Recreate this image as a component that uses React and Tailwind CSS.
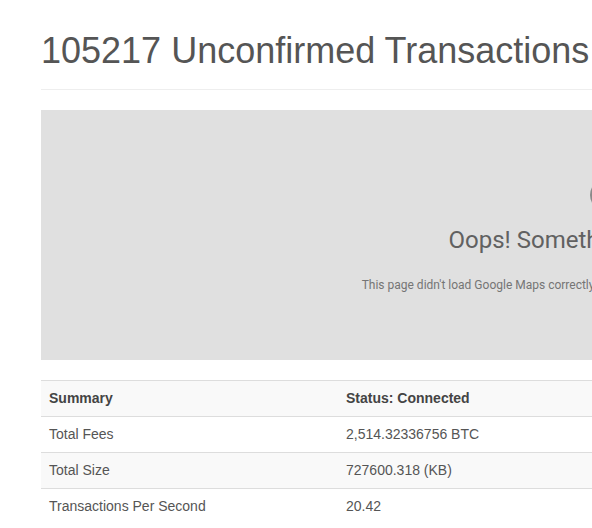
export default function App() {
  const rows = [
    { label: "Total Fees", value: "2,514.32336756 BTC" },
    { label: "Total Size", value: "727600.318 (KB)" },
    { label: "Transactions Per Second", value: "20.42" },
  ];

  return (
    <div className="w-full min-h-[528px] overflow-hidden bg-white font-['Liberation_Sans',Arial,sans-serif]">
      <div className="w-[1140px] ml-[41px]">
        {/* Page header */}
        <div className="pt-[31px] pb-[9px] border-b border-[#eeeeee]">
          <h1 className="text-[36px] leading-[40px] text-[#555555] mb-[9px]">
            105217 Unconfirmed Transactions
          </h1>
        </div>

        {/* Map (failed to load) */}
        <div className="mt-5 h-[250px] w-[1135px] bg-[#e0e0e0] flex flex-col items-center justify-center text-center font-['Roboto',sans-serif]">
          <div className="h-8 w-[38px] rounded-full bg-[#8a8a8a]" />
          <div className="mt-[15px] text-[24px] leading-[28px] text-[#616161]">
            Oops! Something went wrong.
          </div>
          <div className="mt-6 text-[12px] leading-[14px] text-[#757575]">
            This page didn't load Google Maps correctly. See the JavaScript console for technical details.
          </div>
        </div>

        {/* Summary table */}
        <div className="mt-5 text-[14px]">
          <div className="flex items-center h-9 border-t border-[#dddddd] bg-[#f9f9f9] font-bold text-[#444444]">
            <div className="w-[297px] px-2">Summary</div>
            <div className="px-2">Status: Connected</div>
          </div>
          {rows.map((row, i) => (
            <div
              key={row.label}
              className={
                "flex items-center h-9 border-t border-[#dddddd] text-[#555555] " +
                (i % 2 === 1 ? "bg-[#f9f9f9]" : "bg-white")
              }
            >
              <div className="w-[297px] px-2">{row.label}</div>
              <div className="px-2">{row.value}</div>
            </div>
          ))}
        </div>
      </div>
    </div>
  );
}
